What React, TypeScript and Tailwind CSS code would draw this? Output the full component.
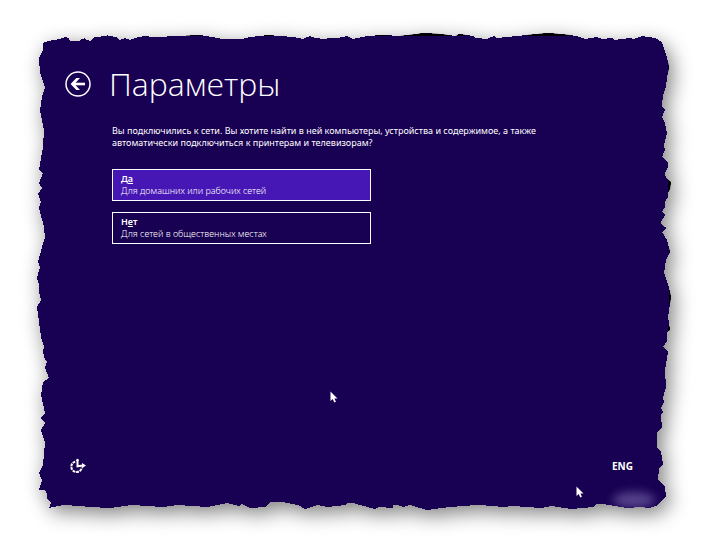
import React from 'react';

interface NetworkOption {
  id: string;
  before: string;
  accessKey: string;
  after: string;
  description: string;
}

const OPTIONS: NetworkOption[] = [
  { id: 'yes', before: 'Д', accessKey: 'а', after: '', description: 'Для домашних или рабочих сетей' },
  { id: 'no', before: 'Н', accessKey: 'е', after: 'т', description: 'Для сетей в общественных местах' },
];

// Outline of the torn sheet, clockwise from the top left corner
const SHEET =
  '43,43 48,41 60,39 65,37 69,38 70,41 79,41 82,39 85,38 86,40 91,41 94,37 107,36 107,35 109,36 117,37 119,40 125,38 130,40 135,38 144,36 153,37 180,36 200,35 212,37 223,39 242,39 250,37 260,36 268,35 280,36 293,37 303,39 310,36 315,38 325,39 329,38 337,38 347,36 353,39 367,36 383,35 400,36 417,34 423,33 440,34 456,36 459,34 473,36 476,38 487,39 494,36 497,38 527,35 548,33 570,35 580,37 585,39 597,37 602,39 612,38 614,40 630,38 633,39 642,36 655,38 662,42 664,48 667,57 669,67 667,78 666,87 663,95 662,106 665,110 662,117 665,123 667,133 664,145 665,150 662,157 668,163 668,167 665,173 666,178 671,182 670,189 668,193 668,197 665,202 665,207 662,212 665,215 661,222 662,225 667,228 662,232 667,240 670,252 666,260 664,273 669,287 671,297 668,317 670,330 667,332 667,341 663,347 668,352 665,370 666,387 663,398 664,402 661,408 663,412 661,415 662,428 657,432 657,448 661,452 663,464 659,468 658,480 665,486 666,497 662,500 658,505 650,508 640,507 627,508 603,504 597,504 593,507 571,509 552,506 541,508 513,506 504,507 480,505 477,505 450,507 427,510 410,505 403,507 397,505 393,505 393,508 379,507 375,509 353,503 347,503 346,505 327,507 318,505 305,509 298,505 292,504 282,502 270,502 266,507 250,508 242,504 239,506 227,503 217,505 207,507 177,505 163,507 132,505 110,508 90,507 80,506 63,505 49,508 51,503 47,498 47,494 45,490 39,490 42,480 39,473 43,465 45,442 41,430 45,423 41,418 45,413 41,395 43,382 49,378 45,368 47,362 45,360 43,352 44,347 41,337 39,322 37,307 41,300 39,292 39,285 37,278 40,267 38,262 42,247 45,238 44,227 39,208 41,202 38,194 42,188 39,183 43,173 39,170 41,158 43,147 44,130 40,110 42,97 45,87 40,73 39,58 43,50';

const TornSheet: React.FC = () => (
  <svg
    aria-hidden="true"
    viewBox="0 0 704 544"
    preserveAspectRatio="none"
    className="absolute inset-0 -z-10 h-full w-full"
  >
    <defs>
      <filter id="sheet-shadow" x="-10%" y="-10%" width="120%" height="120%">
        <feGaussianBlur stdDeviation="10" />
      </filter>
      <filter id="smudge-blur" x="-50%" y="-100%" width="200%" height="300%">
        <feGaussianBlur stdDeviation="5" />
      </filter>
      <clipPath id="sheet-clip">
        <polygon points={SHEET} />
      </clipPath>
    </defs>
    <polygon points={SHEET} transform="translate(4 6)" fill="#000000" opacity="0.5" filter="url(#sheet-shadow)" />
    <polygon points={SHEET} fill="#180052" shapeRendering="crispEdges" />
    <g clipPath="url(#sheet-clip)" fill="#000000">
      <path d="M186 33h14v3h-14zM264 34h8v2h-8zM376 33h13v3h-13zM400 33h50v3h-50zM455 33h10v3h-10zM527 32h43v4h-43z" />
      <path d="M668 62h3v10h-3zM668 178h4v13h-4zM669 248h3v8h-3zM669 290h3v14h-3zM668 326h3v5h-3z" />
      <ellipse cx="634" cy="500" rx="21" ry="8" fill="#55428c" filter="url(#smudge-blur)" />
    </g>
  </svg>
);

const BackIcon: React.FC = () => (
  <svg aria-hidden="true" viewBox="0 0 26 26" className="h-[26px] w-[26px]" fill="none" stroke="#ffffff">
    <circle cx="13" cy="13" r="12" strokeWidth="1.5" />
    <path d="M20 13H8" strokeWidth="2.6" />
    <path d="M15 7h-3.700L5.600 13l5.700 6H15l-5.500-6z" fill="#ffffff" stroke="none" />
  </svg>
);

const EaseOfAccessIcon: React.FC = () => (
  <svg aria-hidden="true" viewBox="0 0 16 16" className="h-4 w-4" fill="none" stroke="#ffffff">
    <path d="M5.200 3.600A5.300 5.300 0 1 0 11.800 9.800" strokeWidth="2" strokeDasharray="2.800 0.800" />
    <path d="M7.500 1v7.300L13 7.600" strokeWidth="2" />
    <path d="M5.800 3 7.500 0.500 9 3zM12 5l4 2.500-4 2.700z" fill="#ffffff" stroke="none" />
  </svg>
);

const Pointer: React.FC<{ className: string }> = ({ className }) => (
  <svg aria-hidden="true" viewBox="0 0 8 12" className={`absolute h-3 w-2 ${className}`}>
    <path d="M0.500 0.500v9.500l2.200-2 1.600 3.500 1.600-0.700-1.500-3.300h3.100z" fill="#ffffff" />
  </svg>
);

export default function App() {
  return (
    <div className="relative isolate flex min-h-screen flex-col bg-white pl-[65px] pr-[71px] pt-16 pb-[70px] font-['Noto_Sans','Open_Sans',sans-serif] text-white">
      <TornSheet />

      <header className="flex h-10 items-center gap-[18px]">
        <button type="button" aria-label="Назад" className="shrink-0">
          <BackIcon />
        </button>
        <h1 className="font-['Open_Sans','Noto_Sans',sans-serif] text-[32px] leading-10 font-light">Параметры</h1>
      </header>

      <main className="pl-[47px]">
        <p className="mt-[21px] max-w-[430px] text-[9px] leading-3">
          Вы подключились к сети. Вы хотите найти в ней компьютеры, устройства и содержимое, а также
          автоматически подключиться к принтерам и телевизорам?
        </p>

        <div className="mt-5 flex max-w-[259px] flex-col gap-[11px]">
          {OPTIONS.map((option) => (
            <button
              key={option.id}
              type="button"
              className={`border px-2 py-[3px] text-left text-[9px] leading-3 ${
                option.id === 'yes' ? 'border-white bg-[#4617b4]' : 'border-white'
              }`}
            >
              <span className="block font-semibold">
                {option.before}
                <u>{option.accessKey}</u>
                {option.after}
              </span>
              <span className="block font-light">{option.description}</span>
            </button>
          ))}
        </div>
      </main>

      <footer className="mt-auto flex items-center justify-between pl-[5px]">
        <button type="button" aria-label="Специальные возможности">
          <EaseOfAccessIcon />
        </button>
        <button type="button" className="font-['Open_Sans','Noto_Sans',sans-serif] text-[10px] leading-4 font-bold">
          ENG
        </button>
      </footer>

      <Pointer className="top-[391px] left-[330px]" />
      <Pointer className="top-[486px] left-[576px]" />
    </div>
  );
}
